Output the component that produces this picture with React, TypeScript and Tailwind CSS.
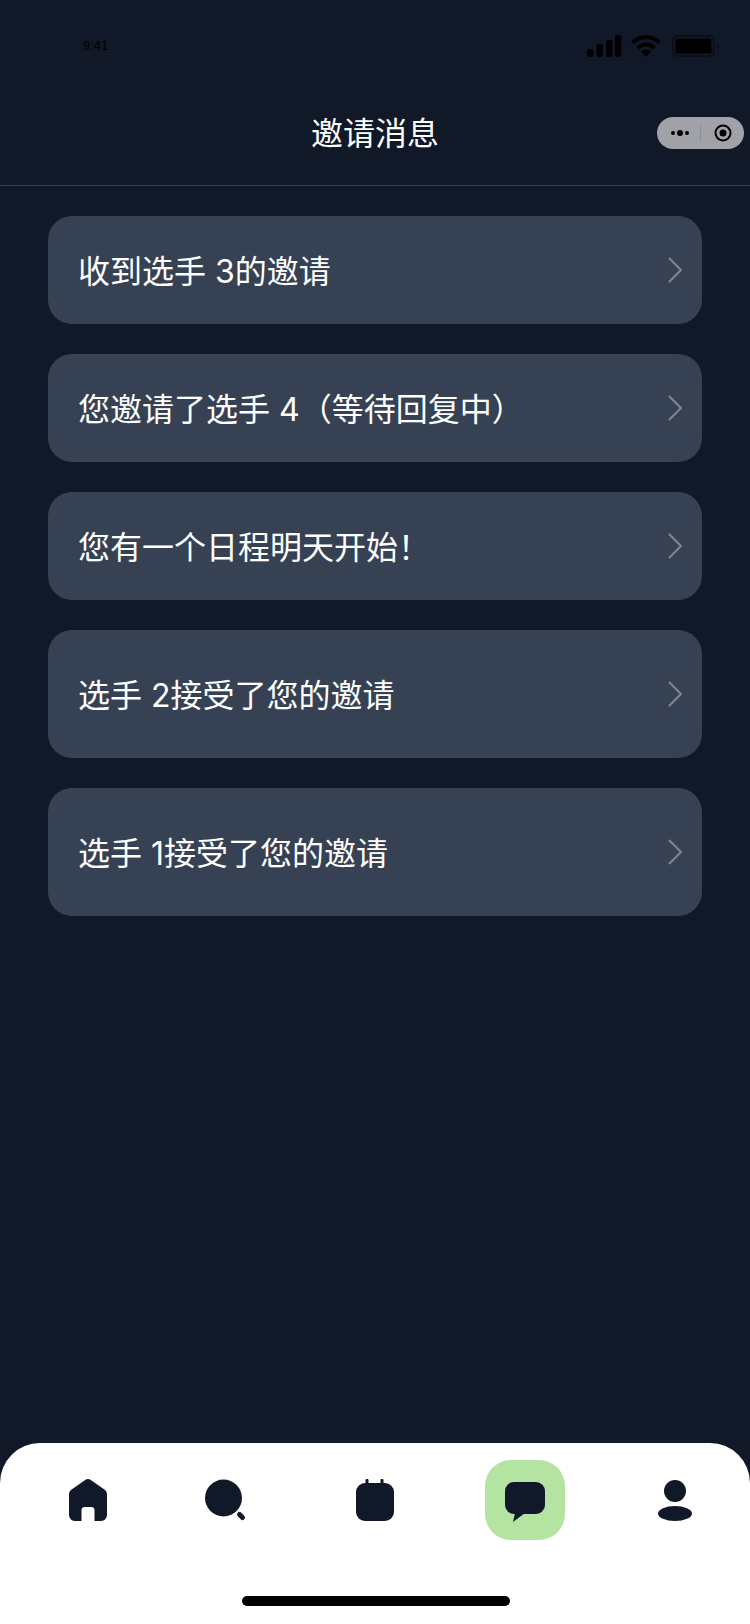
const messages = [
  { id: 1, text: "收到选手 3的邀请", tall: false },
  { id: 2, text: "您邀请了选手 4（等待回复中）", tall: false },
  { id: 3, text: "您有一个日程明天开始！", tall: false },
  { id: 4, text: "选手 2接受了您的邀请", tall: true },
  { id: 5, text: "选手 1接受了您的邀请", tall: true },
];

function StatusIcons() {
  return (
    <div className="flex items-start">
      <svg width="35" height="22" viewBox="0 0 35 22" className="text-black" fill="currentColor">
        <rect x="0" y="14" width="6.5" height="8" rx="2" />
        <rect x="9.5" y="9" width="6.5" height="13" rx="2" />
        <rect x="19" y="5" width="6.5" height="17" rx="2" />
        <rect x="28" y="0" width="6.5" height="22" rx="2" />
      </svg>
      <svg width="30" height="22" viewBox="0 0 30 22" className="ml-[9px] text-black" fill="none" stroke="currentColor" strokeWidth="4">
        <path d="M1.5 7.5C9 0.5 21 0.5 28.5 7.5" />
        <path d="M6.5 12.8C11.5 8.4 18.5 8.4 23.5 12.8" />
        <path d="M15 22L9.8 16.6C12.8 14.2 17.2 14.2 20.2 16.6Z" fill="currentColor" stroke="none" />
      </svg>
      <svg width="48" height="22" viewBox="0 0 48 22" className="ml-[11px]">
        <rect x="1" y="1" width="41" height="20" rx="5" fill="none" stroke="#0b0f18" strokeWidth="2" />
        <rect x="3.5" y="3.5" width="36" height="15" rx="2.5" fill="#000" />
        <path d="M45 8C46.5 8.6 47 9.7 47 11C47 12.3 46.5 13.4 45 14Z" fill="#0b0f18" />
      </svg>
    </div>
  );
}

function CapsuleButton() {
  return (
    <div className="absolute right-[6px] top-[29px] flex h-[32px] w-[87px] items-center rounded-full bg-[#a0a2a8]">
      <svg width="20" height="8" viewBox="0 0 20 8" className="ml-[13px]" fill="#000">
        <circle cx="3" cy="4" r="2" />
        <circle cx="10" cy="4" r="3" />
        <circle cx="17" cy="4" r="2" />
      </svg>
      <div className="ml-[10px] h-[18px] w-px bg-[#8d8f96]" />
      <svg width="18" height="18" viewBox="0 0 18 18" className="ml-[13px]">
        <circle cx="9" cy="9" r="7.5" fill="none" stroke="#000" strokeWidth="2" />
        <circle cx="9" cy="9" r="3.5" fill="#000" />
      </svg>
    </div>
  );
}

function HomeIcon() {
  return (
    <svg width="60" height="60" viewBox="0 0 60 60" fill="#111827">
      <path
        fillRule="evenodd"
        d="M27.6 9.8C29 8.8 31 8.8 32.4 9.8L46.4 19.6C48 20.8 49 22.4 49 24.4V44.5C49 48.1 46.6 51 43 51H36.5V40C36.5 38.3 35.2 37 33.5 37H26.5C24.8 37 23.5 38.3 23.5 40V51H17C13.4 51 11 48.1 11 44.5V24.4C11 22.4 12 20.8 13.6 19.6Z"
      />
    </svg>
  );
}

function SearchIcon() {
  return (
    <svg width="60" height="60" viewBox="0 0 60 60" fill="#111827">
      <circle cx="28.5" cy="28" r="18.5" />
      <path d="M44.5 44.5L47.5 47.5" stroke="#111827" strokeWidth="5" strokeLinecap="round" />
    </svg>
  );
}

function CalendarIcon() {
  return (
    <svg width="60" height="60" viewBox="0 0 60 60" fill="#111827">
      <rect x="11" y="13" width="38" height="38" rx="9" />
      <rect x="20.5" y="9" width="3" height="6" rx="1" />
      <rect x="35.5" y="9" width="3" height="6" rx="1" />
    </svg>
  );
}

function ChatIcon() {
  return (
    <svg width="60" height="60" viewBox="0 0 60 60" fill="#111827">
      <rect x="10" y="12" width="40" height="32" rx="9" />
      <path d="M20 43L18 52L30 43Z" />
    </svg>
  );
}

function ProfileIcon() {
  return (
    <svg width="60" height="60" viewBox="0 0 60 60" fill="#111827">
      <circle cx="30" cy="21" r="11" />
      <ellipse cx="30" cy="43.5" rx="17" ry="7.5" />
    </svg>
  );
}

export default function App() {
  return (
    <div className="flex h-[1624px] w-[750px] flex-col overflow-hidden bg-[#111827] font-['Inter','Noto_Sans_CJK_SC',sans-serif] text-white">
      <div className="flex h-[88px] items-start justify-between pl-[83px] pr-[30px] pt-[35px]">
        <span className="font-['Liberation_Sans',sans-serif] text-[13px] leading-[22px] text-black">9:41</span>
        <StatusIcons />
      </div>

      <header className="relative flex h-[98px] items-center justify-center border-b border-[#374151] pb-[5px]">
        <h1 className="text-[32px] leading-[44px]">邀请消息</h1>
        <CapsuleButton />
      </header>

      <ul className="flex flex-col gap-[30px] px-[48px] pt-[30px]">
        {messages.map((message) => (
          <li
            key={message.id}
            className={
              message.tall
                ? "flex h-[128px] items-center justify-between rounded-3xl bg-[#364153] pl-[30px] pr-[20px]"
                : "flex h-[108px] items-center justify-between rounded-3xl bg-[#364153] pl-[30px] pr-[20px]"
            }
          >
            <span className="pt-[3px] text-[32px] leading-[44px]">{message.text}</span>
            <svg width="14" height="26" viewBox="0 0 14 26" fill="none" stroke="#7b8494" strokeWidth="2.2">
              <path d="M1 1L13 13L1 25" />
            </svg>
          </li>
        ))}
      </ul>

      <nav className="mt-auto h-[181px] rounded-t-[40px] bg-white pt-[17px]">
        <div className="grid grid-cols-5">
          <div className="ml-[26px] flex items-center justify-center">
            <HomeIcon />
          </div>
          <div className="flex h-[80px] items-center justify-center">
            <SearchIcon />
          </div>
          <div className="flex h-[80px] items-center justify-center">
            <CalendarIcon />
          </div>
          <div className="flex h-[80px] items-center justify-center">
            <div className="flex size-[80px] items-center justify-center rounded-[26px] bg-[#b5e3a1]">
              <ChatIcon />
            </div>
          </div>
          <div className="flex h-[80px] items-center justify-center">
            <ProfileIcon />
          </div>
        </div>
        <div className="ml-[242px] mt-[56px] h-[10px] w-[268px] rounded-full bg-black" />
      </nav>
    </div>
  );
}
